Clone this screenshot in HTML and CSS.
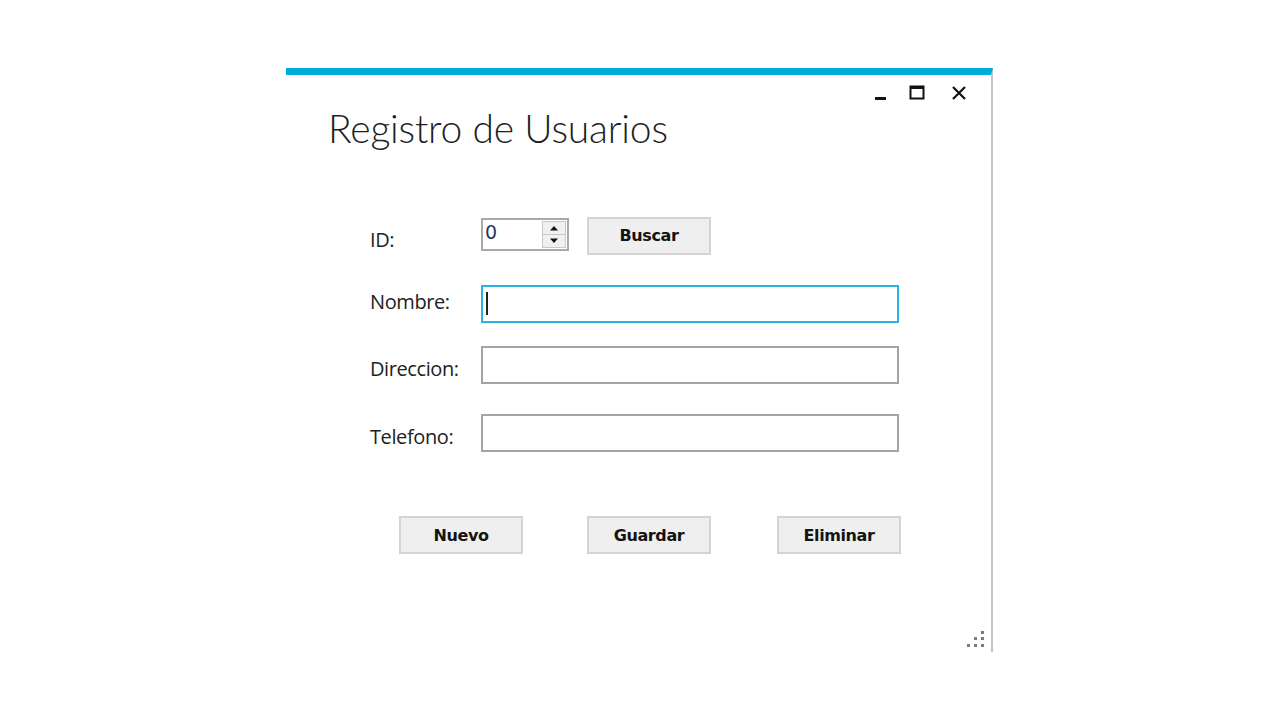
FILE: index.html
```html
<!DOCTYPE html>
<html lang="es">
<head>
<meta charset="utf-8">
<title>Registro de Usuarios</title>
<link rel="stylesheet" href="styles.css">
</head>
<body>
<div class="window">
  <div class="titlebar">
    <span class="ctl ctl-min"><svg width="14" height="14" viewBox="0 0 14 14"><rect x="1" y="10" width="11" height="3" fill="#111"/></svg></span>
    <span class="ctl ctl-max"><svg width="16" height="16" viewBox="0 0 16 16"><rect x="1.5" y="1.5" width="13" height="12" fill="none" stroke="#111" stroke-width="2"/><rect x="1" y="1" width="14" height="3" fill="#111"/></svg></span>
    <span class="ctl ctl-close"><svg width="16" height="16" viewBox="0 0 16 16"><path d="M2 2 L14 14 M14 2 L2 14" stroke="#111" stroke-width="2.2" fill="none"/></svg></span>
  </div>
  <h1 class="title">Registro de Usuarios</h1>
  <div class="form">
    <div class="row row-id">
      <label class="lbl lbl-id">ID:</label>
      <div class="spinner">
        <span class="spin-val">0</span>
        <span class="spin-btns">
          <span class="spin-btn"><svg width="10" height="6" viewBox="0 0 10 6"><path d="M1 5.5 L5 1 L9 5.5 Z" fill="#111"/></svg></span>
          <span class="spin-btn"><svg width="10" height="6" viewBox="0 0 10 6"><path d="M1 0.5 L9 0.5 L5 5 Z" fill="#111"/></svg></span>
        </span>
      </div>
      <button class="btn btn-buscar">Buscar</button>
    </div>
    <div class="row row-nombre">
      <label class="lbl lbl-nombre">Nombre:</label>
      <div class="field focused"><span class="caret"></span></div>
    </div>
    <div class="row row-dir">
      <label class="lbl">Direccion:</label>
      <div class="field"></div>
    </div>
    <div class="row row-tel">
      <label class="lbl">Telefono:</label>
      <div class="field"></div>
    </div>
    <div class="actions">
      <button class="btn">Nuevo</button>
      <button class="btn">Guardar</button>
      <button class="btn">Eliminar</button>
    </div>
  </div>
  <div class="grip">
    <span class="dot d1"></span>
    <span class="dot d2"></span><span class="dot d3"></span>
    <span class="dot d4"></span><span class="dot d5"></span><span class="dot d6"></span>
  </div>
</div>
</body>
</html>
```
FILE: styles.css
```css
* { box-sizing: border-box; }
html, body { margin: 0; padding: 0; background: #fff; }
body {
  width: 1280px;
  height: 720px;
  padding: 68px 0 0 286px;
  font-family: "Open Sans", "Noto Sans", sans-serif;
  color: #222;
}
.window {
  position: relative;
  width: 707px;
  height: 584px;
  border-top: 7px solid #00acd8;
  border-right: 2px solid #c4c4c4;
  background: #fff;
}
.titlebar {
  display: flex;
  justify-content: flex-end;
  align-items: flex-end;
  height: 26px;
  padding-right: 11px;
}
.ctl { display: flex; width: 42px; justify-content: center; }
.ctl svg { display: block; }
.ctl-min { margin-right: -6px; }
.title {
  margin: 3px 0 0 42px;
  font-family: "Lato", "Open Sans", sans-serif;
  font-weight: 300;
  font-size: 39px;
  line-height: 48px;
  color: #1e1e1e;
  letter-spacing: -0.2px;
}
.form {
  margin: 65px 0 0 84px;
  display: flex;
  flex-direction: column;
}
.row {
  display: flex;
  align-items: center;
  height: 37px;
}
.row-nombre { margin-top: 31px; }
.row-dir { margin-top: 24px; }
.row-tel { margin-top: 31px; }
.lbl {
  width: 111px;
  font-size: 20px;
  letter-spacing: -0.4px;
  color: #222;
  padding-top: 8px;
}
.lbl-nombre { padding-top: 0; margin-top: -4px; }
.lbl-id { padding-top: 7px; }
.spinner {
  display: flex;
  width: 88px;
  height: 33px;
  margin-top: -3px;
  border: 2px solid #a9a9a9;
  background: #fff;
}
.spin-val {
  flex: 1;
  font-family: "DejaVu Sans", sans-serif;
  font-size: 19px;
  line-height: 24px;
  padding-left: 2px;
  color: #2a3560;
}
.spin-btns {
  display: flex;
  flex-direction: column;
  width: 24px;
  margin: 1px 1px 1px 0;
  gap: 1px;
  background: #c8c8c8;
  padding: 1px;
}
.spin-btn {
  flex: 1;
  display: flex;
  align-items: center;
  justify-content: center;
  background: #f0f0f0;
}
.spin-btn svg { display: block; }
.btn {
  width: 124px;
  height: 38px;
  border: 2px solid #d4d4d4;
  background: #efefef;
  font-family: "DejaVu Sans", sans-serif;
  font-weight: bold;
  font-size: 16px;
  letter-spacing: -0.4px;
  color: #141414;
  padding: 0;
  margin: 0;
}
.btn-buscar { margin-left: 18px; }
.field {
  width: 418px;
  height: 38px;
  border: 2px solid #a4a4a4;
  background: #fff;
  display: flex;
  align-items: center;
  padding-left: 3px;
}
.field.focused { border-color: #26b4e2; }
.caret {
  width: 2px;
  height: 23px;
  background: #222;
}
.actions {
  display: flex;
  margin: 65px 0 0 29px;
  gap: 64px;
}
.actions .btn:last-child { margin-left: 2px; }
.grip {
  position: absolute;
  right: 6px;
  bottom: 3px;
  width: 18px;
  height: 18px;
}
.dot {
  position: absolute;
  width: 3px;
  height: 3px;
  background: #7c7c7c;
}
.d1 { left: 14px; top: 0; }
.d2 { left: 7px; top: 6px; }
.d3 { left: 14px; top: 6px; }
.d4 { left: 0; top: 13px; }
.d5 { left: 7px; top: 13px; }
.d6 { left: 14px; top: 13px; }
```
